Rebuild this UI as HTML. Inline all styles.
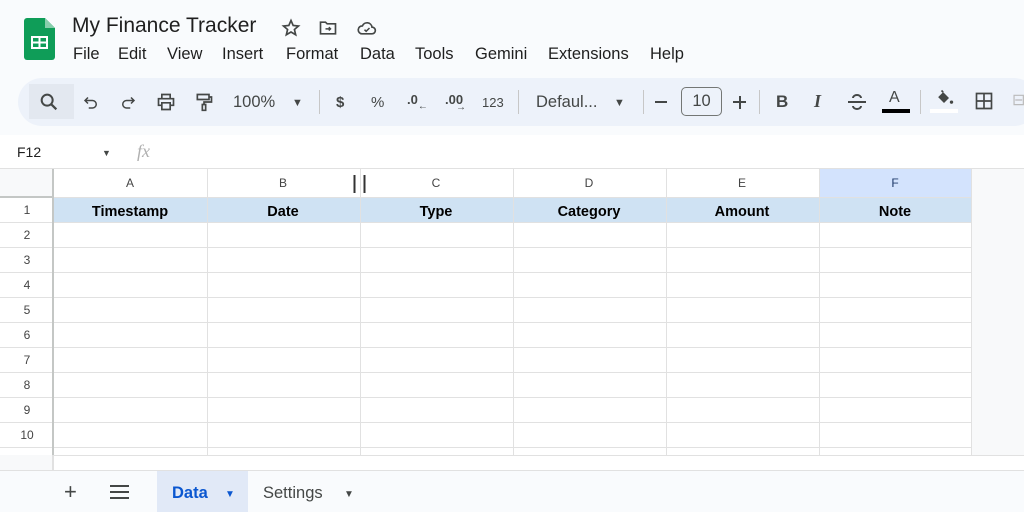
<!DOCTYPE html>
<html><head><meta charset="utf-8"><style>
*{margin:0;padding:0;box-sizing:border-box}
body{width:1024px;height:512px;overflow:hidden;background:#f9fbfd;font-family:"Liberation Sans",Arial,sans-serif;position:relative;color:#1f1f1f}
.abs{position:absolute}
.title{left:72px;top:14px;font-size:21px;color:#1f1f1f}
.menu{top:45px;font-size:16.5px;color:#1f1f1f}
.tb{left:18px;top:78px;width:1020px;height:48px;background:#edf2fa;border-radius:24px}
.ti{top:93px;font-size:16px;color:#444746}
.sep{top:90px;width:1px;height:24px;background:#c7c7c7}
.fb{left:0;top:135px;width:1024px;height:34px;background:#fff;border-bottom:1px solid #e1e1e1}
.grid{left:0;top:169px;width:1024px;height:286px;background:#f8f9fa}
</style></head><body>
<svg class="abs" style="left:24px;top:18px" width="32" height="42" viewBox="0 0 32 42">
<path d="M3 0H21L31 10V39a3 3 0 0 1-3 3H3a3 3 0 0 1-3-3V3a3 3 0 0 1 3-3z" fill="#0f9d58"/>
<path d="M21 0V10H31z" fill="#87ceac"/>
<rect x="7" y="18" width="17" height="13" fill="#fff"/>
<rect x="9" y="20" width="5.5" height="3.5" fill="#0f9d58"/><rect x="16.5" y="20" width="5.5" height="3.5" fill="#0f9d58"/>
<rect x="9" y="25.5" width="5.5" height="3.5" fill="#0f9d58"/><rect x="16.5" y="25.5" width="5.5" height="3.5" fill="#0f9d58"/>
</svg>
<div class="abs title">My Finance Tracker</div>
<svg class="abs" style="left:281px;top:18px" width="20" height="20" viewBox="0 0 24 24"><path d="M12 3l2.6 6 6.4.6-4.9 4.2 1.5 6.3L12 16.8 6.4 20.1l1.5-6.3L3 9.6l6.4-.6z" fill="none" stroke="#444746" stroke-width="2"/></svg>
<svg class="abs" style="left:318px;top:18px" width="20" height="20" viewBox="0 0 24 24"><path d="M3 5h6l2 2h10v12H3z" fill="none" stroke="#444746" stroke-width="2"/><path d="M9 13h6m-2-2l2 2-2 2" stroke="#444746" stroke-width="1.8" fill="none"/></svg>
<svg class="abs" style="left:356px;top:18px" width="22" height="20" viewBox="0 0 24 24"><path d="M6 19h12a4 4 0 0 0 0-8 6 6 0 0 0-11.5-1.5A4.7 4.7 0 0 0 6 19z" fill="none" stroke="#444746" stroke-width="2"/><path d="M9 14l2 2 4-4" stroke="#444746" stroke-width="1.8" fill="none"/></svg>
<div class="abs menu" style="left:73px">File</div>
<div class="abs menu" style="left:118px">Edit</div>
<div class="abs menu" style="left:167px">View</div>
<div class="abs menu" style="left:222px">Insert</div>
<div class="abs menu" style="left:286px">Format</div>
<div class="abs menu" style="left:360px">Data</div>
<div class="abs menu" style="left:415px">Tools</div>
<div class="abs menu" style="left:475px">Gemini</div>
<div class="abs menu" style="left:548px">Extensions</div>
<div class="abs menu" style="left:650px">Help</div>
<div class="abs tb"></div>
<div class="abs" style="left:29px;top:84px;width:45px;height:35px;background:#e3e8f0"></div>
<svg class="abs" style="left:38px;top:91px" width="22" height="22" viewBox="0 0 24 24"><circle cx="10" cy="10" r="6" fill="none" stroke="#444746" stroke-width="2.2"/><path d="M14.5 14.5L20 20" stroke="#444746" stroke-width="2.4"/></svg>
<svg class="abs" style="left:82px;top:93px" width="18" height="18" viewBox="0 0 24 24"><path d="M8 6L4 10l4 4M4 10h10a5 5 0 0 1 0 10H9" fill="none" stroke="#444746" stroke-width="2"/></svg>
<svg class="abs" style="left:119px;top:93px" width="18" height="18" viewBox="0 0 24 24"><path d="M16 6l4 4-4 4M20 10H10a5 5 0 0 0 0 10h5" fill="none" stroke="#444746" stroke-width="2"/></svg>
<svg class="abs" style="left:156px;top:92px" width="20" height="20" viewBox="0 0 24 24"><path d="M7 8V3h10v5M7 16H3V8h18v8h-4M7 13h10v8H7z" fill="none" stroke="#444746" stroke-width="2"/></svg>
<svg class="abs" style="left:194px;top:91px" width="20" height="22" viewBox="0 0 24 24"><path d="M4 3h14v6H4zM18 6h3v6h-9v3M10 15h4v7h-4z" fill="none" stroke="#444746" stroke-width="2"/></svg>
<div class="abs ti" style="left:233px;font-size:16.5px">100%</div>
<div class="abs ti" style="left:292px;font-size:11px;top:97px">▼</div>
<div class="abs sep" style="left:319px"></div>
<div class="abs ti" style="left:336px;font-weight:bold;font-size:15px;top:94px">$</div>
<div class="abs ti" style="left:371px;font-size:15px;top:94px">%</div>
<div class="abs ti" style="left:407px;font-size:13px;top:92px;font-weight:bold">.0<span style="font-size:10px;position:relative;top:5px">←</span></div>
<div class="abs ti" style="left:445px;font-size:13px;top:92px;font-weight:bold">.00<span style="font-size:10px;position:absolute;left:11px;top:10px">→</span></div>
<div class="abs ti" style="left:482px;font-size:13px;top:95px">123</div>
<div class="abs sep" style="left:518px"></div>
<div class="abs ti" style="left:536px;font-size:16.5px">Defaul...</div>
<div class="abs ti" style="left:614px;font-size:11px;top:97px">▼</div>
<div class="abs sep" style="left:643px"></div>
<div class="abs" style="left:655px;top:101px;width:12px;height:2px;background:#444746"></div>
<div class="abs" style="left:681px;top:87px;width:41px;height:29px;border:1px solid #747775;border-radius:5px;text-align:center;font-size:16.5px;line-height:27px;color:#444746">10</div>
<div class="abs" style="left:733px;top:101px;width:13px;height:2px;background:#444746"></div>
<div class="abs" style="left:738.5px;top:95.5px;width:2px;height:13px;background:#444746"></div>
<div class="abs sep" style="left:759px"></div>
<div class="abs ti" style="left:776px;font-weight:bold;font-size:17px;top:92px">B</div>
<div class="abs ti" style="left:814px;font-style:italic;font-size:18px;top:91px;font-family:'Liberation Serif',serif;font-weight:bold">I</div>
<svg class="abs" style="left:847px;top:92px" width="20" height="20" viewBox="0 0 20 20"><path d="M14 6a4 3 0 0 0-8 0M6 14a4 3 0 0 0 8 0M1 10h18" fill="none" stroke="#444746" stroke-width="2"/></svg>
<div class="abs ti" style="left:889px;font-size:16px;top:89px">A</div>
<div class="abs" style="left:882px;top:109px;width:28px;height:4px;background:#000"></div>
<div class="abs sep" style="left:920px"></div>
<svg class="abs" style="left:933px;top:88px" width="22" height="20" viewBox="0 0 24 24"><path d="M5 11l6-6 7 7-6 6z" fill="#444746"/><path d="M9 3l2 2" stroke="#444746" stroke-width="2"/><circle cx="21" cy="17" r="2" fill="#444746"/></svg>
<div class="abs" style="left:930px;top:109px;width:28px;height:4px;background:#fff"></div>
<svg class="abs" style="left:974px;top:91px" width="20" height="20" viewBox="0 0 24 24"><path d="M3 3h18v18H3zM12 3v18M3 12h18" fill="none" stroke="#444746" stroke-width="2"/></svg>
<div class="abs ti" style="left:1012px;color:#bbb;top:90px">⊟</div>
<div class="abs fb"></div>
<div class="abs" style="left:17px;top:144px;font-size:14px">F12</div>
<div class="abs" style="left:102px;top:148px;font-size:9px;color:#444746">▼</div>
<div class="abs" style="left:137px;top:141px;font-size:18px;color:#b0b0b0;font-style:italic;font-family:'Liberation Serif',serif">fx</div>
<div class="abs grid">
<svg width="1024" height="286" style="position:absolute;left:0;top:0" font-family="Liberation Sans,Arial,sans-serif">
<rect x="0" y="0" width="54" height="28" fill="#f8f9fa"/>
<rect x="54" y="0" width="918" height="28" fill="#fff"/>
<rect x="819" y="0" width="153" height="28" fill="#d3e3fd"/>
<rect x="0" y="28" width="54" height="258" fill="#fff"/>
<rect x="54" y="28" width="918" height="25" fill="#cfe2f3"/>
<rect x="54" y="53" width="918" height="233" fill="#fff"/>
<g stroke="#e1e1e1" stroke-width="1">
<line x1="0" y1="28.5" x2="972" y2="28.5"/>
<line x1="0" y1="53.5" x2="972" y2="53.5"/>
<line x1="0" y1="78.5" x2="972" y2="78.5"/><line x1="0" y1="103.5" x2="972" y2="103.5"/>
<line x1="0" y1="128.5" x2="972" y2="128.5"/><line x1="0" y1="153.5" x2="972" y2="153.5"/>
<line x1="0" y1="178.5" x2="972" y2="178.5"/><line x1="0" y1="203.5" x2="972" y2="203.5"/>
<line x1="0" y1="228.5" x2="972" y2="228.5"/><line x1="0" y1="253.5" x2="972" y2="253.5"/>
<line x1="0" y1="278.5" x2="972" y2="278.5"/>
<line x1="207.5" y1="0" x2="207.5" y2="286"/><line x1="360.5" y1="0" x2="360.5" y2="286"/>
<line x1="513.5" y1="0" x2="513.5" y2="286"/><line x1="666.5" y1="0" x2="666.5" y2="286"/>
<line x1="819.5" y1="0" x2="819.5" y2="286"/><line x1="971.5" y1="0" x2="971.5" y2="286"/>
</g>
<rect x="0" y="0" width="54" height="28" fill="#f8f9fa"/>
<line x1="53" y1="0" x2="53" y2="286" stroke="#c4c7c5" stroke-width="2"/>
<line x1="0" y1="28" x2="54" y2="28" stroke="#c4c7c5" stroke-width="2"/>
<line x1="354.5" y1="6" x2="354.5" y2="24" stroke="#333" stroke-width="2"/>
<line x1="364.5" y1="6" x2="364.5" y2="24" stroke="#333" stroke-width="2"/>
<g font-size="12" fill="#444" text-anchor="middle">
<text x="130" y="18">A</text><text x="283" y="18">B</text><text x="436" y="18">C</text><text x="589" y="18">D</text><text x="742" y="18">E</text><text x="895" y="18" fill="#1f3b6b">F</text>
<text x="27" y="45">1</text><text x="27" y="70">2</text><text x="27" y="95">3</text><text x="27" y="120">4</text><text x="27" y="145">5</text><text x="27" y="170">6</text><text x="27" y="195">7</text><text x="27" y="220">8</text><text x="27" y="245">9</text><text x="27" y="270">10</text>
</g>
<g font-size="14.5" font-weight="bold" fill="#000" text-anchor="middle">
<text x="130" y="47">Timestamp</text><text x="283" y="47">Date</text><text x="436" y="47">Type</text><text x="589" y="47">Category</text><text x="742" y="47">Amount</text><text x="895" y="47">Note</text>
</g>
</svg>
</div>
<div class="abs" style="left:0;top:455px;width:1024px;height:15px;background:#fff;border-top:1px solid #e1e1e1"></div>
<div class="abs" style="left:0;top:455px;width:54px;height:15px;background:#f8f9fa;border-right:2px solid #e1e1e1"></div>
<div class="abs" style="left:0;top:470px;width:1024px;height:42px;background:#f9fbfd;border-top:1px solid #e1e1e1"></div>
<div class="abs" style="left:64px;top:479px;font-size:22px;color:#444746">+</div>
<svg class="abs" style="left:110px;top:485px" width="19" height="14" viewBox="0 0 19 14"><path d="M0 1h19M0 7h19M0 13h19" stroke="#444746" stroke-width="2"/></svg>
<div class="abs" style="left:157px;top:471px;width:91px;height:41px;background:#e1e9f7"></div>
<div class="abs" style="left:172px;top:484px;font-size:16.5px;font-weight:bold;color:#0b57d0">Data</div>
<div class="abs" style="left:225px;top:489px;font-size:10px;color:#0b57d0">▼</div>
<div class="abs" style="left:263px;top:484px;font-size:16.5px;color:#444746">Settings</div>
<div class="abs" style="left:344px;top:489px;font-size:10px;color:#444746">▼</div>
</body></html>
